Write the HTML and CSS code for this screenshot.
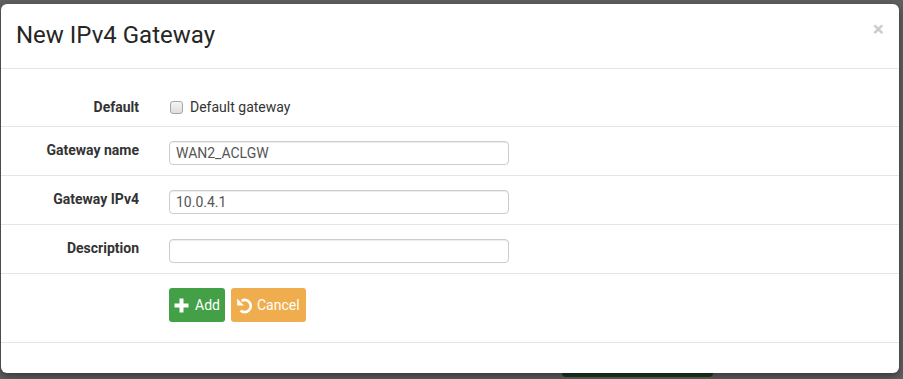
FILE: index.html
```html
<!DOCTYPE html>
<html lang="en">
<head>
  <meta charset="UTF-8" />
  <meta name="viewport" content="width=device-width, initial-scale=1.0"/>
  <title>New IPv4 Gateway</title>
  <link rel="stylesheet" href="styles.css">
</head>
<body>
  <!-- page behind the backdrop -->
  <div class="behind-btn"></div>

  <div class="modal">
    <div class="modal-header">
      <h3 class="modal-title">New IPv4 Gateway</h3>
      <span class="close">&times;</span>
    </div>

    <form class="modal-body">
      <div class="form-row first">
        <label class="form-label">Default</label>
        <label class="check">
          <input type="checkbox" class="checkbox">
          <span>Default gateway</span>
        </label>
      </div>
      <div class="form-row">
        <label class="form-label">Gateway name</label>
        <input type="text" class="form-input" value="WAN2_ACLGW">
      </div>
      <div class="form-row">
        <label class="form-label">Gateway IPv4</label>
        <input type="text" class="form-input" value="10.0.4.1">
      </div>
      <div class="form-row">
        <label class="form-label">Description</label>
        <input type="text" class="form-input" value="">
      </div>
      <div class="form-row buttons">
        <span></span>
        <div class="btn-group">
          <button type="button" class="btn btn-add">
            <svg width="15" height="15" viewBox="0 0 15 15"><path d="M5.5 0.5h4v5h5v4h-5v5h-4v-5h-5v-4h5z" fill="#fff"/></svg>
            Add
          </button>
          <button type="button" class="btn btn-cancel">
            <svg width="17" height="17" viewBox="0 0 17 17">
              <path d="M4.6 13.4A6 6 0 1 0 5.6 3.9" fill="none" stroke="#fff" stroke-width="2.8"/>
              <path d="M1.2 1.6V8.4H8Z" fill="#fff"/>
            </svg>
            Cancel
          </button>
        </div>
      </div>
    </form>

    <div class="modal-footer"></div>
  </div>
</body>
</html>
```

FILE: styles.css
```css
* {
  box-sizing: border-box;
}

body {
  margin: 0;
  font-family: Roboto, "Liberation Sans", Arial, sans-serif;
  font-size: 14px;
  background: #606060;
  height: 379px;
  overflow: hidden;
  position: relative;
}

.behind-btn {
  position: absolute;
  left: 562px;
  top: 350px;
  width: 151px;
  height: 27px;
  background: #1d3a20;
  border-radius: 4px;
}

.modal {
  position: relative;
  margin: 4px 0 0 1px;
  width: 898px;
  height: 369px;
  background: #fff;
  border-radius: 6px;
  box-shadow: 0 3px 8px rgba(0,0,0,0.45);
}

.modal-header {
  display: flex;
  justify-content: space-between;
  align-items: flex-start;
  height: 65px;
  padding: 18px 15px 0 15px;
  border-bottom: 1px solid #e5e5e5;
}

.modal-title {
  margin: 0;
  font-size: 24px;
  font-weight: 400;
  line-height: 1.1;
  color: #262626;
}

.close {
  font-size: 21px;
  font-weight: bold;
  line-height: 1;
  color: #000;
  opacity: 0.2;
  margin-top: -3px;
}

.form-row {
  display: grid;
  grid-template-columns: 138px 340px;
  column-gap: 30px;
  align-items: start;
  height: 49px;
  padding-top: 13px;
  border-bottom: 1px solid #e5e5e5;
}

.form-row.first {
  height: 58px;
  padding-top: 28px;
}

.form-label {
  text-align: right;
  font-weight: bold;
  line-height: 20px;
  color: #333;
}

.check {
  display: flex;
  align-items: center;
  gap: 7px;
  line-height: 20px;
  color: #333;
  padding-left: 1px;
}

.checkbox {
  appearance: none;
  margin: 0;
  width: 13px;
  height: 13px;
  border: 1px solid #a6a6a6;
  border-radius: 3px;
  background: linear-gradient(#f4f4f4, #dedede);
}

.form-input {
  margin-top: 1px;
  width: 340px;
  height: 24px;
  padding: 0 6px;
  font-family: inherit;
  font-size: 14px;
  color: #555;
  border: 1px solid #ccc;
  border-radius: 4px;
  box-shadow: inset 0 1px 1px rgba(0,0,0,0.075);
  outline: none;
}

.form-row.buttons {
  height: 69px;
  padding-top: 14px;
}

.btn-group {
  display: flex;
  gap: 6px;
}

.btn {
  display: flex;
  align-items: center;
  gap: 6px;
  height: 34px;
  padding: 0 5px;
  font-family: inherit;
  font-size: 14px;
  color: #fff;
  border: none;
  border-radius: 3px;
  cursor: pointer;
}

.btn-add {
  background: #43a047;
}

.btn-cancel {
  background: #f0ad4e;
  gap: 4px;
  padding-right: 6px;
}

.modal-footer {
  height: 30px;
}
```
